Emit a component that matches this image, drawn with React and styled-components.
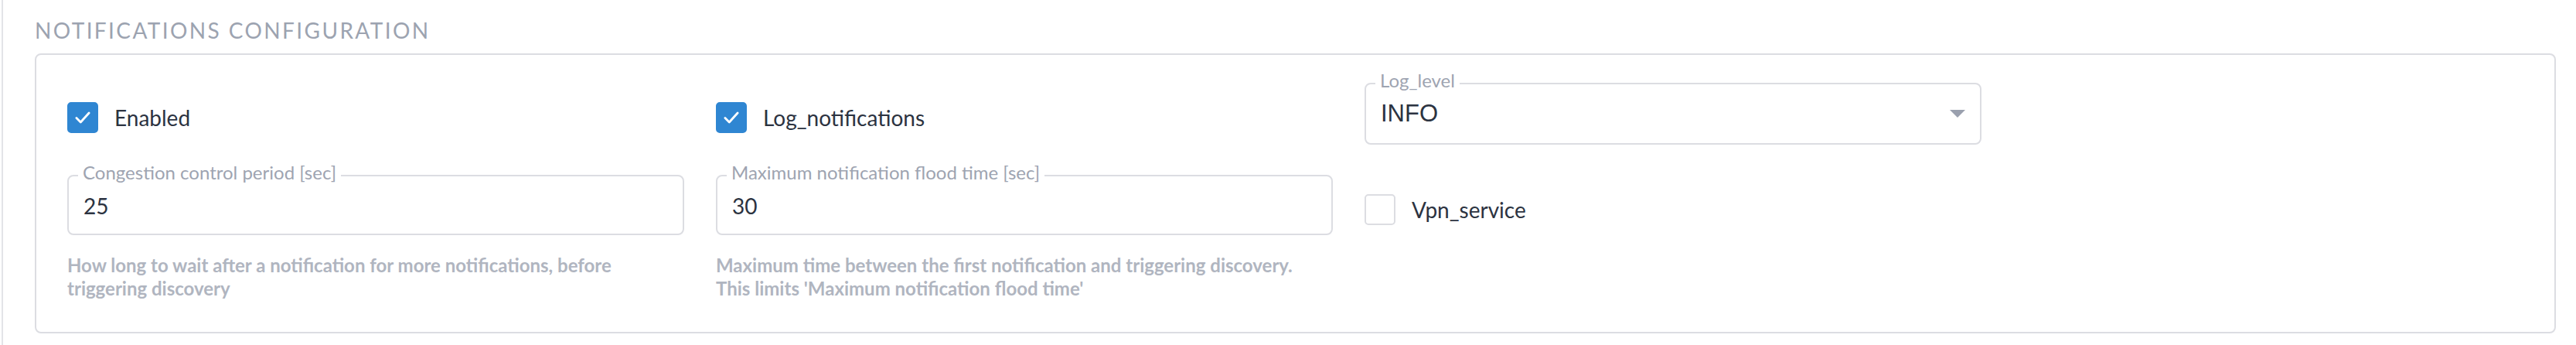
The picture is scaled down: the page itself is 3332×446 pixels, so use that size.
import React from "react";
import styled, { createGlobalStyle } from "styled-components";

const GlobalStyle = createGlobalStyle`
  html, body { margin: 0; padding: 0; background: #ffffff; }
  body { font-family: Lato, "Open Sans", sans-serif; color: #2c3341; }
`;

const Page = styled.div`
  min-height: 100vh;
  box-sizing: border-box;
  margin-left: 2px;
  border-left: 2px solid #e3e4e8;
  padding: 22px 0 0 41px;
`;

const Title = styled.div`
  font-size: 28px;
  line-height: 34px;
  color: #9ca3b0;
  text-transform: uppercase;
  letter-spacing: 2.4px;
`;

const Section = styled.div`
  width: 3261px;
  box-sizing: border-box;
  margin-top: 13px;
  border: 2px solid #dcdde2;
  border-radius: 8px;
  padding: 21px 40px 41px;
  display: grid;
  grid-template-columns: repeat(3, 798px);
  column-gap: 41px;
  row-gap: 24px;
  align-items: start;
`;

const Column = styled.div`
  display: flex;
  flex-direction: column;
`;

const CheckRow = styled.label`
  display: flex;
  align-items: center;
  gap: 21px;
  margin-top: 40px;
  font-size: 28px;
  line-height: 40px;
  color: #2c3341;
`;

const Box = styled.span`
  width: 40px;
  height: 40px;
  box-sizing: border-box;
  border-radius: 5px;
  display: flex;
  align-items: center;
  justify-content: center;
  background: ${(p) => (p.checked ? "#2f86d2" : "#ffffff")};
  border: 2px solid ${(p) => (p.checked ? "#2f86d2" : "#dcdde2")};
`;

const Field = styled.fieldset`
  margin: 0;
  min-width: 0;
  border: 2px solid #dcdde2;
  border-radius: 8px;
  padding: 0 ${(p) => (p.select ? "19px" : "12px")} ${(p) => (p.select ? "20px" : "19px")} 12px;
`;

const Legend = styled.legend`
  padding: 0 6px 8px;
  font-size: 24px;
  line-height: 24px;
  color: #9ea4b1;
`;

const Value = styled.div`
  margin-top: 6px;
  padding-left: 7px;
  font-size: 28px;
  line-height: 34px;
  color: #2c3341;
`;

const SelectRow = styled.div`
  margin-top: 5px;
  padding-left: 7px;
  display: flex;
  align-items: center;
  justify-content: space-between;
`;

const SelectValue = styled.span`
  font-family: "Liberation Sans", Arial, sans-serif;
  font-size: 31px;
  line-height: 36px;
  color: #2c3341;
`;

const Help = styled.div`
  margin-top: 24px;
  font-size: 24px;
  line-height: 30px;
  font-weight: 700;
  color: #b0b5c0;
`;

const Check = ({ checked, label }) => (
  <CheckRow>
    <Box checked={checked}>
      {checked && (
        <svg width="26" height="26" viewBox="0 0 24 24">
          <polyline points="4.5,12.5 9.5,17.5 19.5,6.5" fill="none" stroke="#ffffff" strokeWidth="2.6" strokeLinecap="round" strokeLinejoin="round" />
        </svg>
      )}
    </Box>
    {label}
  </CheckRow>
);

const TextField = ({ label, value, help }) => (
  <Column>
    <Field>
      <Legend>{label}</Legend>
      <Value>{value}</Value>
    </Field>
    <Help>{help}</Help>
  </Column>
);

export default function App() {
  return (
    <>
      <GlobalStyle />
      <Page>
        <Title>Notifications configuration</Title>
        <Section>
          <Check checked label="Enabled" />
          <Check checked label="Log_notifications" />
          <Field select>
            <Legend>Log_level</Legend>
            <SelectRow>
              <SelectValue>INFO</SelectValue>
              <svg width="20" height="10" viewBox="0 0 20 10">
                <polygon points="0,0 20,0 10,10" fill="#9aa0ae" />
              </svg>
            </SelectRow>
          </Field>
          <TextField
            label="Congestion control period [sec]"
            value="25"
            help={<>How long to wait after a notification for more notifications, before<br />triggering discovery</>}
          />
          <TextField
            label="Maximum notification flood time [sec]"
            value="30"
            help={<>Maximum time between the first notification and triggering discovery.<br />This limits 'Maximum notification flood time'</>}
          />
          <Check label="Vpn_service" />
        </Section>
      </Page>
    </>
  );
}
